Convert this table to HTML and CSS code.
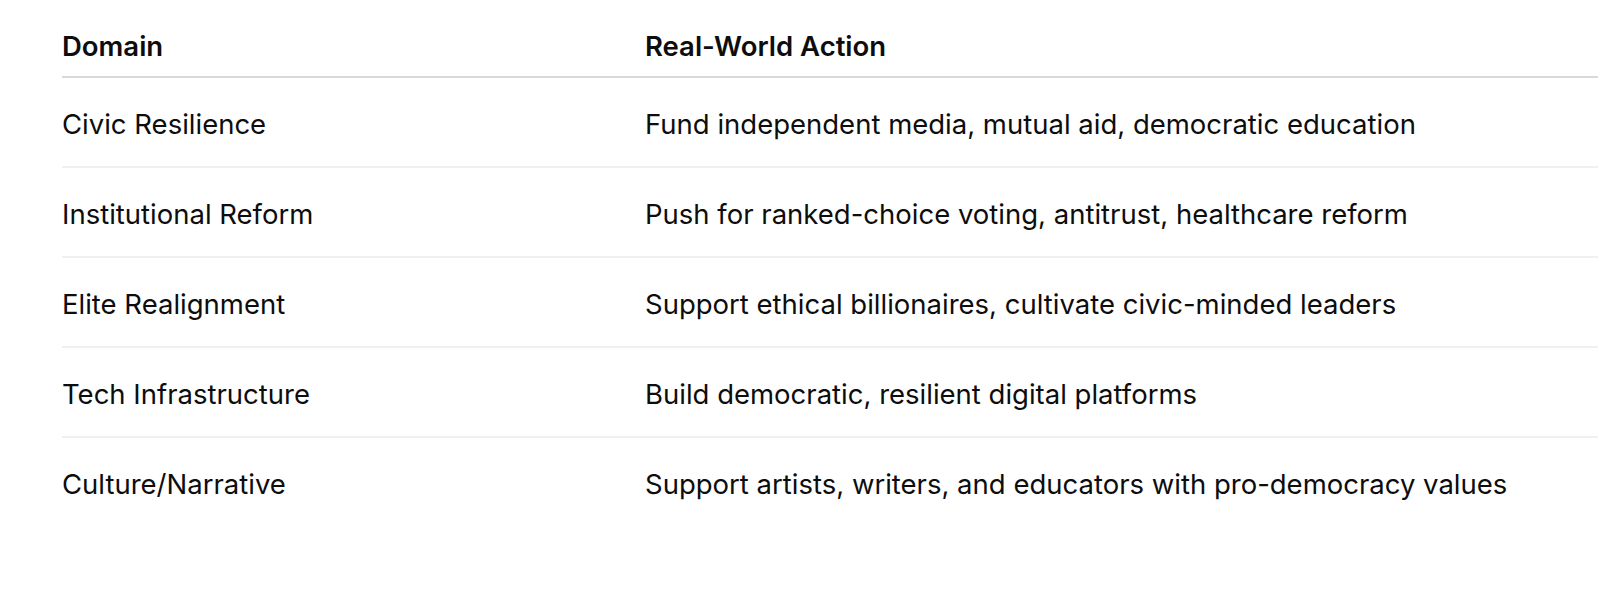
FILE: index.html
```html
<!DOCTYPE html>
<html lang="en">
<head>
<meta charset="utf-8">
<title>Table</title>
<link rel="stylesheet" href="styles.css">
</head>
<body>
<div class="wrap">
<table class="tbl">
<thead>
<tr><th class="c1">Domain</th><th>Real-World Action</th></tr>
</thead>
<tbody>
<tr><td>Civic Resilience</td><td>Fund independent media, mutual aid, democratic education</td></tr>
<tr><td>Institutional Reform</td><td>Push for ranked-choice voting, antitrust, healthcare reform</td></tr>
<tr><td>Elite Realignment</td><td>Support ethical billionaires, cultivate civic-minded leaders</td></tr>
<tr><td>Tech Infrastructure</td><td>Build democratic, resilient digital platforms</td></tr>
<tr><td>Culture/Narrative</td><td>Support artists, writers, and educators with pro-democracy values</td></tr>
</tbody>
</table>
</div>
</body>
</html>
```
FILE: styles.css
```css
html, body {
  margin: 0;
  padding: 0;
  background: #ffffff;
}
body {
  font-family: Inter, "Noto Sans", "Liberation Sans", sans-serif;
  color: #0d0d0d;
}
.wrap {
  padding: 14px 0 0 62px;
}
.tbl {
  width: 1536px;
  border-collapse: collapse;
  font-size: 27.5px;
  line-height: 40px;
}
.tbl th, .tbl td {
  text-align: left;
  padding: 0;
  vertical-align: middle;
}
.tbl th {
  font-weight: 600;
  padding: 12px 0 10px;
  border-bottom: 2px solid #d9d9d9;
}
.tbl .c1 {
  width: 583px;
}
.tbl td {
  padding: 26px 0 22px;
  border-bottom: 2px solid #f0f0f0;
}
.tbl tbody tr:last-child td {
  border-bottom: none;
}
```
